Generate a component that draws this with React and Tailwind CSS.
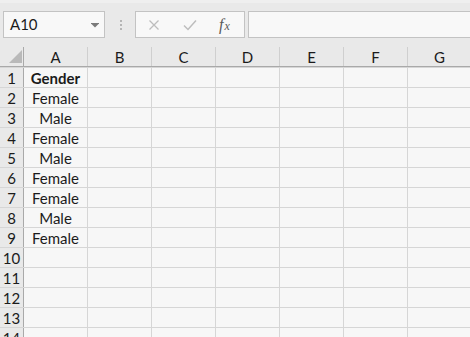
import React from "react";

const COLS = ["A", "B", "C", "D", "E", "F", "G"];
const DATA = {
  1: "Gender",
  2: "Female",
  3: "Male",
  4: "Female",
  5: "Male",
  6: "Female",
  7: "Female",
  8: "Male",
  9: "Female",
};

export default function App() {
  const rows = Array.from({ length: 14 }, (_, i) => i + 1);
  return (
    <div className="w-[470px] h-[337px] overflow-hidden bg-[#f7f7f7] font-['Lato','Open_Sans',sans-serif] text-[#1b1b1b]">
      {/* toolbar */}
      <div className="h-[47px] bg-[#e9e9e9] flex items-start pt-[8px] pl-[3px] border-t-[3px] border-[#efefef]">
        <div className="w-[102px] h-[27px] shrink-0 border border-[#c3c3c3] bg-[#f8f8f8] flex items-center justify-between pl-[6px] pr-[5px]">
          <span className="text-[15px] leading-none">A10</span>
          <svg width="8" height="5" viewBox="0 0 8 5" className="mt-[1px]">
            <rect x="0" y="0" width="8" height="1" fill="#7a7a7a" />
            <polygon points="0.5,1 7.5,1 4,4.5" fill="#7a7a7a" />
          </svg>
        </div>
        <div className="ml-[14px] w-[3px] h-[27px] shrink-0 flex flex-col items-center justify-center gap-[2px]">
          <div className="w-[2px] h-[2px] bg-[#b5b5b5]" />
          <div className="w-[2px] h-[2px] bg-[#b5b5b5]" />
          <div className="w-[2px] h-[2px] bg-[#b5b5b5]" />
        </div>
        <div className="ml-[13px] w-[110px] h-[27px] shrink-0 border border-[#c3c3c3] bg-[#f8f8f8] flex items-center">
          <svg width="12" height="12" viewBox="0 0 12 12" className="ml-[12px]">
            <path d="M1.5 1.5 L10.5 10.5 M10.5 1.5 L1.5 10.5" stroke="#bdbdbd" strokeWidth="1.3" fill="none" />
          </svg>
          <svg width="14" height="12" viewBox="0 0 14 12" className="ml-[23px]">
            <path d="M1 6.5 L5 10.5 L13 1.5" stroke="#bdbdbd" strokeWidth="1.5" fill="none" />
          </svg>
          <span className="ml-[22px] font-['Liberation_Serif',serif] italic text-[#5a5a5a] leading-none flex items-baseline">
            <span className="text-[16px]">f</span>
            <span className="text-[12px] ml-[1px]">x</span>
          </span>
        </div>
        <div className="ml-[3px] w-[240px] h-[27px] shrink-0 border border-[#c3c3c3] bg-[#f8f8f8]" />
      </div>

      {/* column header */}
      <div className="flex h-[20px] bg-[#e9e9e9] border-b border-[#a9a9a9]">
        <div className="w-[24px] shrink-0 border-r border-[#a9a9a9] relative">
          <svg width="14" height="14" viewBox="0 0 14 14" className="absolute left-[9px] top-[3px]">
            <polygon points="0,13 13,13 13,0" fill="#b9b9b9" />
          </svg>
        </div>
        {COLS.map((c) => (
          <div
            key={c}
            className="w-[64px] shrink-0 border-r border-[#cfcfcf] flex items-center justify-center text-[15px] leading-none pt-[1px]"
          >
            {c}
          </div>
        ))}
      </div>

      {/* rows */}
      {rows.map((r) => (
        <div key={r} className="flex h-[20px] border-t border-[#d6d6d6]">
          <div className="w-[24px] shrink-0 bg-[#e9e9e9] border-r border-[#a9a9a9] flex items-center justify-center text-[15px] leading-none pt-[1px]">
            {r}
          </div>
          {COLS.map((c) => (
            <div
              key={c}
              className={
                "w-[64px] shrink-0 border-r border-[#d6d6d6] flex items-center justify-center text-[15px] leading-none pt-[1px] " +
                (r === 1 && c === "A" ? "font-bold" : "")
              }
            >
              {c === "A" ? DATA[r] || "" : ""}
            </div>
          ))}
        </div>
      ))}
    </div>
  );
}
